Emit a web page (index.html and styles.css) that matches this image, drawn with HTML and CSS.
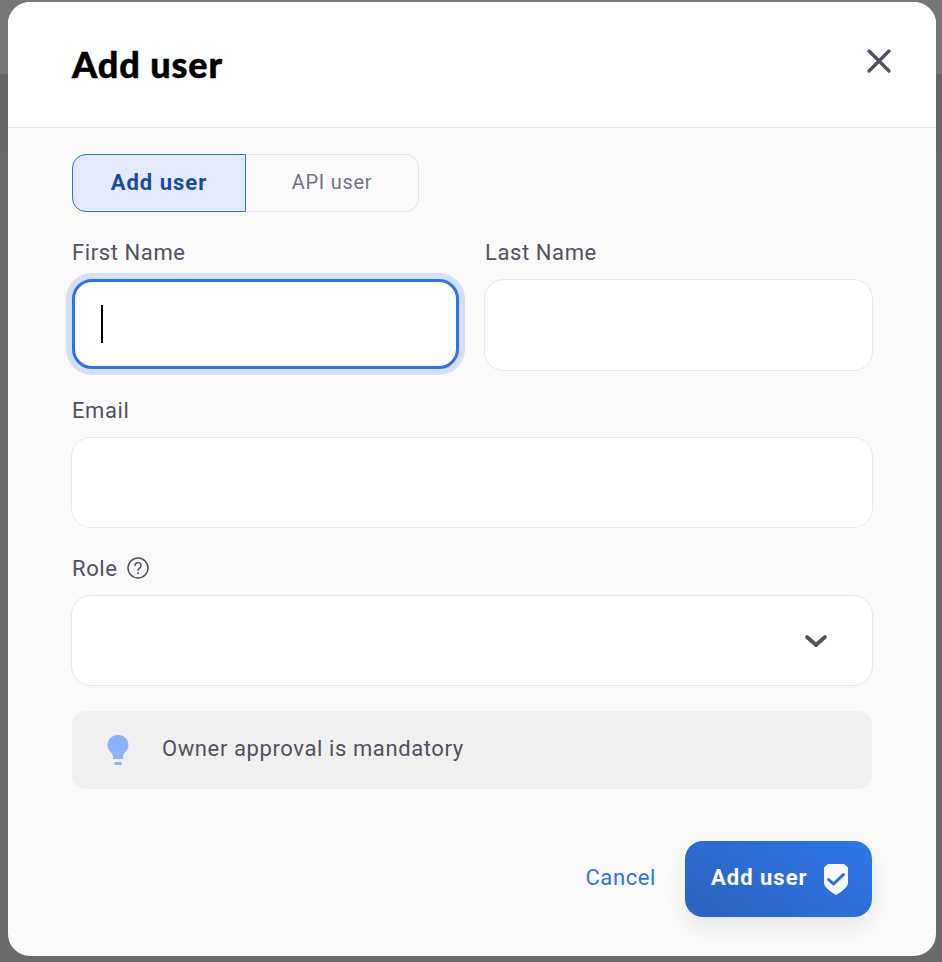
FILE: index.html
```html
<!DOCTYPE html>
<html lang="en">
<head>
    <meta charset="UTF-8">
    <meta name="viewport" content="width=device-width, initial-scale=1.0">
    <title>Add user</title>
    <link rel="stylesheet" href="styles.css">
</head>
<body>
    <div class="modal">
        <header class="modal-header">
            <h1>Add user</h1>
            <button class="close-btn" aria-label="Close">
                <svg width="26" height="26" viewBox="0 0 26 26"><path d="M3 3L23 23M23 3L3 23" fill="none" stroke="#51515f" stroke-width="3.4" stroke-linecap="round"/></svg>
            </button>
        </header>
        <main class="modal-body">
            <div class="tabs">
                <button class="tab active">Add user</button>
                <button class="tab">API user</button>
            </div>
            <div class="field-row">
                <div class="field">
                    <label>First Name</label>
                    <div class="input focused"><span class="caret"></span></div>
                </div>
                <div class="field">
                    <label>Last Name</label>
                    <div class="input"></div>
                </div>
            </div>
            <div class="field">
                <label>Email</label>
                <div class="input"></div>
            </div>
            <div class="field">
                <label>Role
                    <svg width="24" height="24" viewBox="0 0 24 24"><circle cx="12" cy="12" r="10" fill="none" stroke="#51515f" stroke-width="1.5"/><path d="M9 9.600a3 3 0 1 1 4.600 2.500c-1 .7-1.600 1.200-1.600 2.400" fill="none" stroke="#51515f" stroke-width="1.500" stroke-linecap="round"/><circle cx="12" cy="17.300" r="1" fill="#51515f"/></svg>
                </label>
                <div class="input select">
                    <svg width="24" height="14" viewBox="0 0 24 14"><path d="M3 3L12 11L21 3" fill="none" stroke="#51515f" stroke-width="3.800" stroke-linecap="round" stroke-linejoin="round"/></svg>
                </div>
            </div>
            <div class="notice">
                <svg width="24" height="32" viewBox="0 0 24 32"><path d="M12 1C6 1 1.500 5.400 1.500 11c0 3.600 1.800 6 3.800 7.800 1.300 1.200 1.700 2.500 1.700 6.200h10c0-3.700.4-5 1.700-6.200 2-1.800 3.800-4.200 3.800-7.800C22.500 5.400 18 1 12 1z" fill="#8cb2fb"/><rect x="8.500" y="28" width="7" height="3" fill="#8cb2fb"/></svg>
                <span class="lifted">Owner approval is mandatory</span>
            </div>
            <div class="actions">
                <a href="#" class="cancel">Cancel</a>
                <button class="submit"><span class="lifted">Add user</span>
                    <svg width="26" height="32" viewBox="0 0 26 32"><path d="M5 1H21L25 4.500V20c0 3.500-5 8-12 12C6 28 1 23.500 1 20V4.500z" fill="#f5f8ff"/><path d="M5.500 16.500L10.500 21L20.500 11.500" fill="none" stroke="#2d6ed8" stroke-width="3" stroke-linecap="round" stroke-linejoin="round"/></svg>
                </button>
            </div>
        </main>
    </div>
</body>
</html>
```

FILE: styles.css
```css
* {
    box-sizing: border-box;
}

body {
    font-family: Roboto, sans-serif;
    margin: 0;
    padding: 2px 6px 6px 8px;
    height: 962px;
    overflow: hidden;
    background: linear-gradient(#777 74px, #646566 74px, #646566 152px, #6a6a6a 152px);
    color: #51515f;
}

.modal {
    display: flex;
    flex-direction: column;
    height: 954px;
    border-radius: 22px;
    overflow: hidden;
    background-color: #fafafa;
}

.modal-header {
    display: flex;
    justify-content: space-between;
    align-items: center;
    height: 126px;
    padding: 0 44px 0 64px;
    background-color: #fff;
    border-bottom: 1px solid #e6e6e6;
}

.modal-header h1 {
    margin: 0 0 2px;
    font-family: Lato, sans-serif;
    font-weight: 900;
    font-size: 36px;
    letter-spacing: 0.9px;
    -webkit-text-stroke: 0.5px #000;
    color: #000;
}

.close-btn {
    display: flex;
    padding: 0;
    margin-bottom: 7px;
    background: none;
    border: none;
    cursor: pointer;
}

.modal-body {
    display: flex;
    flex-direction: column;
    padding: 26px 63px 0 63px;
}

.tabs {
    display: flex;
    align-self: flex-start;
    height: 58px;
    margin: 0 0 25px 1px;
}

.tab {
    width: 173px;
    padding: 0 0 2px;
    font-family: Roboto, sans-serif;
    font-size: 20px;
    letter-spacing: 0.7px;
    color: #73737f;
    background: none;
    border: 1px solid #e6e6e6;
    border-left: none;
    border-radius: 0 14px 14px 0;
}

.tab.active {
    width: 174px;
    font-size: 22px;
    font-weight: 700;
    letter-spacing: 1px;
    color: #1a4a9c;
    background-color: #e4eaf9;
    border: 1px solid #2d6fe0;
    border-radius: 14px 0 0 14px;
}

.field-row {
    display: flex;
    gap: 24px;
}

.field {
    margin-bottom: 25px;
}

.field-row .field {
    flex: 1;
    margin-bottom: 24.5px;
}

.field label {
    display: flex;
    align-items: center;
    gap: 8px;
    height: 30px;
    margin: 0 0 12px 1px;
    font-size: 22px;
    letter-spacing: 0.6px;
}

.input {
    height: 91px;
    background-color: #fff;
    border: 1px solid #e8e8e8;
    border-radius: 20px;
}

.field-row .input {
    height: 91.5px;
}

.field-row .input.focused {
    display: flex;
    align-items: center;
    height: 89.5px;
    margin: 1px;
    padding-left: 26px;
    border: 3px solid #2d74e8;
    box-shadow: 0 0 0 6px #d3e0f8;
}

.caret {
    width: 2px;
    height: 38px;
    background-color: #000;
}

.select {
    display: flex;
    justify-content: flex-end;
    align-items: center;
    padding-right: 44px;
}

.notice {
    display: flex;
    align-items: center;
    gap: 32px;
    height: 78px;
    margin: 0 1px;
    padding-left: 34px;
    font-size: 22px;
    letter-spacing: 0.6px;
    background-color: #f0f0f0;
    border-radius: 14px;
}

.lifted {
    margin-bottom: 4px;
}

.actions {
    display: flex;
    justify-content: flex-end;
    align-items: center;
    gap: 29px;
    margin: 52px 1px 0 0;
}

.cancel {
    margin-bottom: 4px;
    font-size: 22px;
    letter-spacing: 0.6px;
    color: #2d74e8;
    text-decoration: none;
}

.submit {
    display: flex;
    align-items: center;
    gap: 15px;
    width: 187px;
    height: 76px;
    padding-left: 26px;
    font-family: Roboto, sans-serif;
    font-weight: 700;
    font-size: 22px;
    letter-spacing: 1px;
    color: #fff;
    background: linear-gradient(30deg, #2c62bd, #2d76eb);
    border: none;
    border-radius: 18px;
    box-shadow: 0 10px 24px rgba(0, 0, 0, 0.08);
}
```
